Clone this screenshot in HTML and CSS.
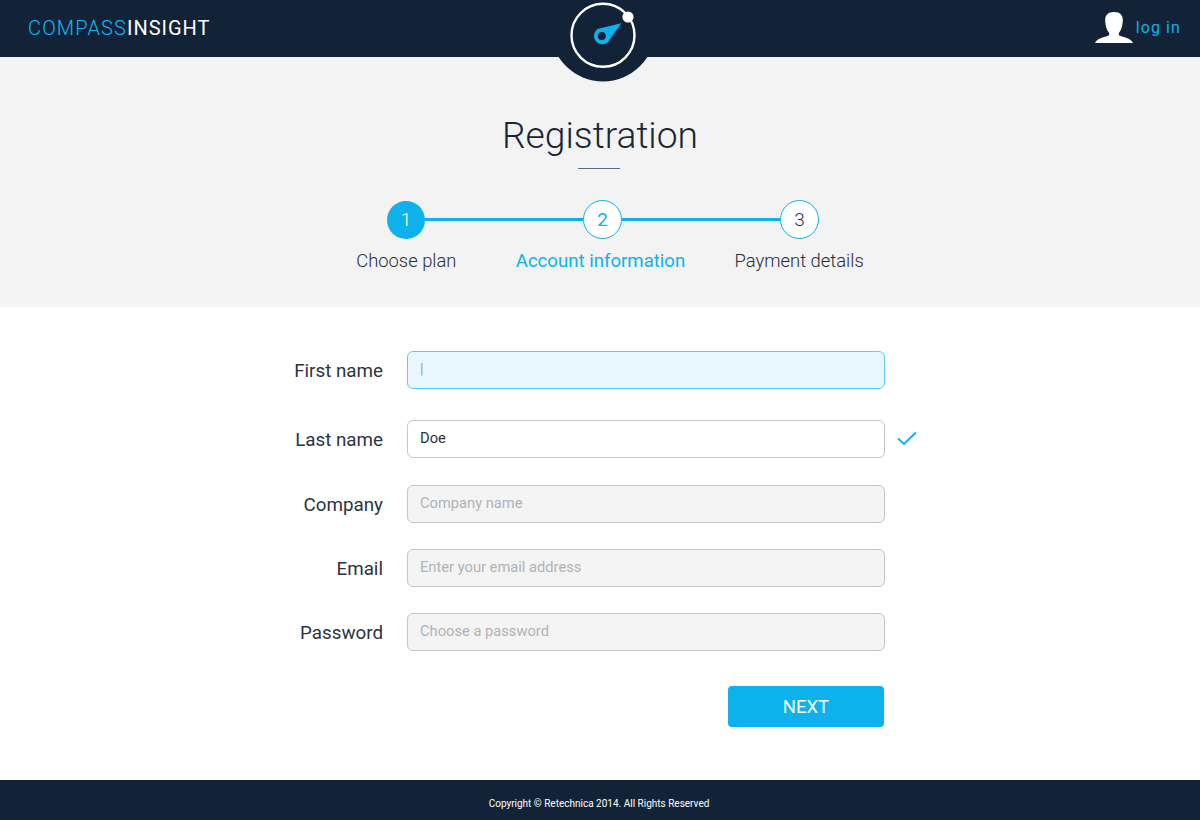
FILE: index.html
```html
<!DOCTYPE html>
<html lang="en">
<head>
<meta charset="utf-8">
<title>Registration</title>
<link rel="stylesheet" href="styles.css">
</head>
<body>
<header class="topbar">
  <div class="brand"><span class="brand-a">COMPASS</span><span class="brand-b">INSIGHT</span></div>
  <svg class="emblem" viewBox="0 0 104 82" width="104" height="82" aria-hidden="true">
    <circle cx="52" cy="29" r="52.5" fill="#122338"/>
    <circle cx="52" cy="35.3" r="31.5" fill="none" stroke="#fff" stroke-width="2.4"/>
    <circle cx="77" cy="17" r="5.6" fill="#fff"/>
    <path d="M70.4 23.2 L46.4 29 A8.1 8.1 0 1 0 56.6 42.6 Z" fill="#0db2ec"/>
    <circle cx="50.8" cy="36" r="4" fill="#122338"/>
  </svg>
  <a class="login" href="#">
    <svg class="user" viewBox="0 0 38 31" width="38" height="31" aria-hidden="true">
      <path d="M19 0 C13 0 10 3 10.2 8.5 C10.4 13.5 11.6 18 13.8 20.4 C14.8 21.6 14.4 23 13 23.8 C10 25.4 2.5 25.8 0 31 L38 31 C35.5 25.8 28 25.4 25 23.8 C23.6 23 23.2 21.6 24.2 20.4 C26.4 18 27.6 13.5 27.8 8.5 C28 3 25 0 19 0 Z" fill="#fff"/>
    </svg>
    <span>log in</span>
  </a>
</header>

<section class="hero">
  <h1 class="title">Registration</h1>
  <div class="rule"></div>
  <div class="track">
    <span class="dot dot-done">1</span>
    <span class="line"></span>
    <span class="dot dot-open dot-active">2</span>
    <span class="line"></span>
    <span class="dot dot-open">3</span>
  </div>
  <div class="step-labels">
    <span class="step">Choose plan</span>
    <span class="step step-active">Account information</span>
    <span class="step">Payment details</span>
  </div>
</section>

<main class="content">
  <form class="form">
    <div class="row row-first">
      <label class="label">First name</label>
      <input class="field field-focus" type="text" value="|">
    </div>
    <div class="row row-second">
      <label class="label">Last name</label>
      <input class="field field-filled" type="text" value="Doe">
      <svg class="check" viewBox="0 0 20 15" width="20" height="15" aria-hidden="true">
        <path d="M1 7.5 L7 13 L19 1.5" fill="none" stroke="#0db2ec" stroke-width="2"/>
      </svg>
    </div>
    <div class="row row-third">
      <label class="label">Company</label>
      <input class="field" type="text" placeholder="Company name">
    </div>
    <div class="row row-third">
      <label class="label">Email</label>
      <input class="field" type="text" placeholder="Enter your email address">
    </div>
    <div class="row row-last">
      <label class="label">Password</label>
      <input class="field" type="text" placeholder="Choose a password">
    </div>
    <div class="actions">
      <button class="next" type="button">NEXT</button>
    </div>
  </form>
</main>

<footer class="footer">Copyright © Retechnica 2014. All Rights Reserved</footer>
</body>
</html>
```

FILE: styles.css
```css
* { box-sizing: border-box; }
html, body { margin: 0; padding: 0; }
body {
  width: 1200px;
  height: 820px;
  overflow: hidden;
  background: #fff;
  font-family: Roboto, "Liberation Sans", sans-serif;
  color: #2b3440;
  display: flex;
  flex-direction: column;
}

.topbar {
  position: relative;
  height: 57px;
  background: #122338;
  display: flex;
  align-items: center;
  justify-content: space-between;
  padding: 0 19px 0 28px;
  flex: none;
  z-index: 1;
}
.brand {
  font-size: 20px;
  font-weight: 300;
  letter-spacing: 1.15px;
  white-space: nowrap;
  margin-top: -2px;
}
.brand-a { color: #12b8f4; }
.brand-b { color: #fff; font-weight: 400; letter-spacing: 0.95px; }
.emblem {
  position: absolute;
  left: 551px;
  top: 0;
}
.login {
  display: flex;
  align-items: center;
  gap: 3px;
  color: #0db2ec;
  font-size: 16px;
  letter-spacing: 1.1px;
  text-decoration: none;
  margin-top: -2px;
}
.user { display: block; }

.hero {
  height: 250px;
  flex: none;
  background: #f3f3f3;
  display: flex;
  flex-direction: column;
  align-items: center;
}
.title {
  margin: 54px 0 0;
  font-size: 37.2px;
  line-height: 48px;
  font-weight: 300;
  color: #1b2635;
}
.rule {
  width: 42px;
  height: 1px;
  margin: 9px 2px 0 0;
  background: #5b6b85;
}
.track {
  width: 432px;
  margin: 31px 0 0 6px;
  display: flex;
  align-items: center;
}
.line {
  flex: 1;
  height: 3px;
  background: #0db2ec;
}
.dot {
  width: 39px;
  height: 39px;
  border-radius: 50%;
  display: flex;
  align-items: center;
  justify-content: center;
  font-size: 19px;
  font-weight: 300;
  flex: none;
}
.dot-done { background: #0db2ec; color: #fff; width: 38px; height: 38px; }
.dot-open { background: #fff; border: 1px solid #0db2ec; color: #2b3440; }
.dot-active { color: #0db2ec; font-weight: 400; }
.step-labels {
  width: 590px;
  margin: 10px 0 0 6px;
  display: grid;
  grid-template-columns: repeat(3, 1fr);
  text-align: center;
  font-size: 18.4px;
  line-height: 24px;
  font-weight: 300;
  color: #252e3a;
}
.step { white-space: nowrap; }
.step-active { color: #0db2ec; font-size: 18.6px; font-weight: 400; margin-right: 5px; }
.step:last-child { margin-right: 1px; }

.content {
  flex: 1;
  padding-top: 44px;
}
.row {
  display: grid;
  grid-template-columns: 383px 478px auto;
  column-gap: 24px;
  align-items: center;
  height: 38px;
}
.row-first { margin-bottom: 31px; }
.row-second { margin-bottom: 27px; }
.row-third { margin-bottom: 26px; }
.row-last { margin-bottom: 35px; }
.label {
  text-align: right;
  font-size: 18.8px;
  font-weight: 400;
  color: #2b3440;
  padding-top: 2px;
}
.field {
  width: 478px;
  height: 38px;
  padding: 0 12px 2px;
  border: 1px solid #c4c7ca;
  border-radius: 6px;
  background: #f4f4f4;
  font-family: inherit;
  font-size: 14.7px;
  color: #2b3440;
  outline: none;
}
.field::placeholder { color: #b0b3b6; opacity: 1; }
.field-filled { background: #fff; }
.field-focus {
  background: #e8f6fd;
  border-color: #5fcbf2;
  color: #9aa6ae;
}
.check { margin-left: -12px; margin-top: -2px; }
.actions {
  width: 884px;
  display: flex;
  justify-content: flex-end;
}
.next {
  width: 156px;
  height: 41px;
  border: 0;
  border-radius: 4px;
  background: #0db2ec;
  color: #fff;
  font-family: inherit;
  font-size: 18.5px;
  font-weight: 400;
}

.footer {
  height: 40px;
  flex: none;
  background: #122338;
  color: #fff;
  font-size: 10px;
  display: flex;
  align-items: center;
  justify-content: center;
  padding-top: 7px;
  padding-right: 2px;
}
```
